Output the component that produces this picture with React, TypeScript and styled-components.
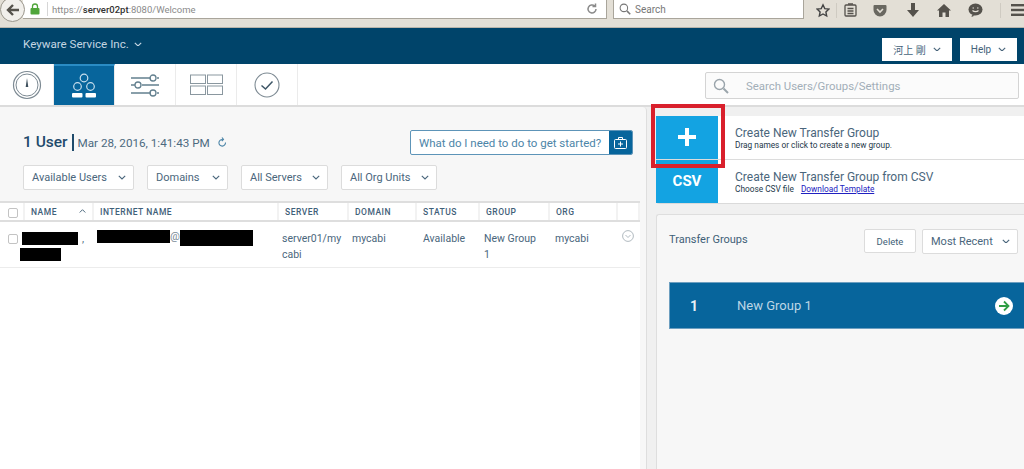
import React from 'react';
import styled, {createGlobalStyle} from 'styled-components';

const GlobalStyle = createGlobalStyle`
  html, body {
    margin: 0;
    padding: 0;
    height: 469px;
    overflow: hidden;
    background: #f0f0f0;
    font-family: Roboto, "Liberation Sans", "Noto Sans CJK JP", sans-serif;
    color: #34556e;
  }
  * { box-sizing: border-box; }
`;

const Page = styled.div`
  width: 1024px;
  height: 469px;
  display: flex;
  flex-direction: column;
  overflow: hidden;
  position: relative;
`;

/* browser chrome */
const Chrome = styled.div`
  height: 28px;
  flex: none;
  background: #e3dfd6;
  border-bottom: 1px solid #b9b5ab;
  display: flex;
  align-items: flex-start;
  position: relative;
`;

const BackButton = styled.div`
  width: 25px;
  height: 25px;
  margin-top: -3px;
  border-radius: 50%;
  border: 1px solid #9a968c;
  background: #f1efeb;
  display: flex;
  align-items: center;
  justify-content: center;
  flex: none;
  z-index: 1;
`;

const UrlBar = styled.div`
  width: 584px;
  margin-left: -2px;
  height: 19px;
  background: #fff;
  border-right: 1px solid #a9a59b;
  border-bottom: 1px solid #a9a59b;
  display: flex;
  align-items: center;
  padding: 0 8px 0 7px;
  flex: none;
`;

const UrlDivider = styled.span`
  width: 1px;
  height: 14px;
  background: #d6d6d6;
  margin: 0 4px 0 7px;
`;

const UrlText = styled.span`
  font-size: 9.5px;
  color: #8a8a8a;
  flex: 1;
  b { color: #333; font-weight: 500; }
`;

const BrowserSearch = styled.div`
  width: 191px;
  height: 19px;
  margin-left: 6px;
  background: #fff;
  border: 1px solid #a9a59b;
  border-top: none;
  display: flex;
  align-items: center;
  gap: 4px;
  padding-left: 5px;
  font-size: 10px;
  color: #777;
  flex: none;
`;

const ChromeIcons = styled.div`
  flex: 1;
  height: 20px;
  display: flex;
  align-items: center;
  padding-left: 12px;
  color: #55524c;
`;

const ChromeIcon = styled.span<{$w: number}>`
  width: ${p => p.$w}px;
  display: flex;
  justify-content: center;
  flex: none;
`;

const ChromeSep = styled.span<{$left: number}>`
  width: 1px;
  height: 15px;
  margin-left: ${p => p.$left}px;
  background: #cfcbc2;
  flex: none;
`;

/* blue header */
const Header = styled.header`
  height: 36px;
  flex: none;
  background: #00446a;
  display: flex;
  align-items: center;
  padding: 6px 7px 0 23px;
  gap: 8px;
`;

const Brand = styled.div`
  flex: 1;
  color: #c4d6e2;
  font-size: 11.6px;
  display: flex;
  align-items: center;
  gap: 5px;
  margin-top: -10px;
`;

const HeaderButton = styled.div<{$w: number}>`
  width: ${p => p.$w}px;
  height: 23px;
  background: #fff;
  color: #44637a;
  font-size: 10px;
  display: flex;
  align-items: center;
  justify-content: center;
  gap: 7px;
`;

/* tab row */
const Nav = styled.nav`
  height: 43px;
  flex: none;
  background: #fff;
  border-bottom: 2px solid #dcdcdc;
  display: flex;
  align-items: stretch;
`;

const Tab = styled.div<{$w?: number; $active?: boolean}>`
  width: ${p => p.$w ?? 61}px;
  background: ${p => (p.$active ? '#07659c' : '#fff')};
  border-top: ${p => (p.$active ? '2px solid #2a8cc4' : 'none')};
  border-right: 1px solid #ebebeb;
  display: flex;
  align-items: center;
  justify-content: center;
  flex: none;
`;

const NavSearch = styled.div`
  width: 314px;
  height: 27px;
  margin: 8px 5px 0 auto;
  border: 1px solid #d4d4d4;
  border-radius: 2px;
  background: #fbfbfb;
  display: flex;
  align-items: center;
  padding-left: 7px;
  gap: 17px;
  color: #a2aeb8;
  font-size: 11.4px;
`;

/* page body */
const Body = styled.main`
  flex: 1;
  display: grid;
  grid-template-columns: 647px 1fr;
  min-height: 0;
`;

const LeftPanel = styled.section`
  background: #f7f7f7;
  border-right: 1px solid #dedede;
  border-radius: 0 4px 0 0;
  padding-right: 6px;
  display: flex;
  flex-direction: column;
`;

const TitleRow = styled.div`
  display: flex;
  align-items: center;
  padding: 22px 7px 0 23px;
  height: 49px;
`;

const Title = styled.h1`
  margin: 0;
  font-size: 15.5px;
  font-weight: 500;
  color: #1f4b6b;
  padding-right: 4px;
  border-right: 2px solid #1f4b6b;
  line-height: 17px;
`;

const Stamp = styled.span`
  font-size: 11.7px;
  color: #4d6a80;
  margin-left: 4px;
  flex: 1;
  display: flex;
  align-items: center;
  gap: 8px;
`;

const StartedBox = styled.div`
  width: 223px;
  height: 25px;
  display: flex;
  border: 1px solid #5d94b8;
  border-radius: 2px;
  background: #fff;
  overflow: hidden;
  color: #4c85a8;
  font-size: 11.5px;
  white-space: nowrap;
  align-items: center;
  padding-left: 8px;
  justify-content: space-between;
`;

const StartedIcon = styled.span`
  width: 23px;
  height: 100%;
  background: #07659c;
  display: flex;
  align-items: center;
  justify-content: center;
  flex: none;
`;

const Filters = styled.div`
  display: flex;
  gap: 13px;
  padding: 9px 0 0 23px;
  height: 45px;
`;

const Select = styled.div<{$w: number}>`
  width: ${p => p.$w}px;
  height: 25px;
  background: #fff;
  border: 1px solid #dcdcdc;
  border-radius: 2px;
  color: #4a667c;
  font-size: 11px;
  display: flex;
  align-items: center;
  justify-content: space-between;
  padding: 0 7px 0 8px;
  flex: none;
`;

const TableWrap = styled.div`
  flex: 1;
  background: #fff;
  border-top: 2px solid #dedede;
  font-size: 10.5px;
  color: #4a667c;
`;

const columns = '25px 69px 185px 70px 68px 63px 70px 68px 22px';

const HeadRow = styled.div`
  display: grid;
  grid-template-columns: ${columns};
  height: 19px;
  border-bottom: 2px solid #dedede;
`;

const HeadCell = styled.div<{$flush?: boolean}>`
  font-size: 8.5px;
  font-weight: 500;
  letter-spacing: 0.5px;
  color: #3f6079;
  display: flex;
  align-items: center;
  justify-content: space-between;
  padding: ${p => (p.$flush ? '0' : '0 6px')};
  border-right: 2px solid #f2f2f2;
`;

const Row = styled.div`
  display: grid;
  grid-template-columns: ${columns};
  height: 46px;
  border-bottom: 1px solid #ececec;
`;

const Cell = styled.div<{$left?: number}>`
  padding: 9px 2px 0 ${p => p.$left ?? 3}px;
  line-height: 16px;
`;

const ExpandCell = styled.div`
  padding: 8px 0 0 4px;
  svg { display: block; }
`;

const CheckBox = styled.span<{$top?: number}>`
  display: block;
  width: 10px;
  height: 10px;
  margin: ${p => p.$top ?? 5}px 0 0 8px;
  background: #fff;
  border: 1px solid #c3c3c3;
  border-radius: 2px;
`;

const Redacted = styled.span<{$w: number; $h: number}>`
  display: inline-block;
  width: ${p => p.$w}px;
  height: ${p => p.$h}px;
  background: #000;
  flex: none;
`;

const NameCell = styled.div`
  display: flex;
  flex-direction: column;
  gap: 3px;
  padding-top: 10px;
  margin-left: -5px;
`;

const NameLine = styled.div`
  display: flex;
  align-items: flex-end;
  gap: 4px;
  line-height: 12px;
  margin-left: 2px;
`;

const MailCell = styled.div`
  display: flex;
  align-items: flex-start;
  padding: 8px 0 0 3px;
  font-size: 11px;
  line-height: 14px;
  color: #7b8a96;
`;

const RightPanel = styled.aside`
  padding: 9px 0 0 9px;
  display: flex;
  flex-direction: column;
  gap: 10px;
  min-width: 0;
`;

const ActionCard = styled.div`
  background: #fff;
  border-radius: 3px 0 0 3px;
  border-bottom: 1px solid #dadada;
  display: flex;
  flex-direction: column;
`;

const Action = styled.div<{$divided?: boolean}>`
  height: 43.5px;
  display: flex;
  border-bottom: ${p => (p.$divided ? '1px solid #dcdcdc' : 'none')};
`;

const ActionTile = styled.div`
  width: 62px;
  background: #13a3e2;
  color: #fff;
  font-weight: 700;
  font-size: 15px;
  display: flex;
  align-items: center;
  justify-content: center;
  flex: none;
`;

const ActionText = styled.div`
  padding: 10px 0 0 17px;
  font-size: 12px;
  color: #4a667c;
  line-height: 15px;
`;

const ActionSub = styled.div`
  font-size: 8.3px;
  line-height: 9px;
  color: #24384a;
  a {
    color: #2020c0;
    text-decoration: underline;
    margin-left: 5px;
  }
`;

const GroupsPanel = styled.div`
  flex: 1;
  background: #f7f7f7;
  border: 1px solid #dedede;
  border-right: none;
  border-bottom: none;
  border-radius: 3px 0 0 0;
  padding: 13px 0 0 12px;
`;

const GroupsHead = styled.div`
  display: flex;
  align-items: center;
  height: 26px;
  padding-right: 6px;
  gap: 6px;
`;

const GroupsTitle = styled.div`
  flex: 1;
  font-size: 11px;
  color: #3f5f77;
  margin-top: -3px;
`;

const SmallButton = styled.div`
  width: 52px;
  height: 24px;
  background: #fff;
  border: 1px solid #dcdcdc;
  border-radius: 2px;
  font-size: 9.5px;
  color: #3f5f77;
  display: flex;
  align-items: center;
  justify-content: center;
`;

const GroupRow = styled.div`
  margin-top: 28px;
  height: 47px;
  background: #07659c;
  border: 1px solid #6d9fc0;
  border-right: none;
  color: #bcd6e6;
  display: flex;
  align-items: center;
  padding: 0 11px 0 20px;
  font-size: 13px;
`;

const GroupIndex = styled.span`
  width: 47px;
  color: #e6f0f6;
  font-size: 14px;
  font-weight: 700;
`;

const GroupName = styled.span`
  flex: 1;
`;

const Highlight = styled.div`
  position: absolute;
  left: 651px;
  top: 104px;
  width: 74px;
  height: 64px;
  border: 4px solid #d9202c;
`;

const Chevron = ({size = 8, color = '#4a667c', up = false}: {size?: number; color?: string; up?: boolean}) => (
    <svg width={size} height={size * 0.6} viewBox="0 0 10 6" fill="none" stroke={color} strokeWidth="1.4">
        <path d={up ? 'M1 5l4-4 4 4' : 'M1 1l4 4 4-4'}/>
    </svg>
);

const Magnifier = ({size, color}: {size: number; color: string}) => (
    <svg width={size} height={size} viewBox="0 0 16 16" fill="none" stroke={color} strokeWidth="1.4">
        <circle cx="6.5" cy="6.5" r="5"/>
        <path d="M10.5 10.5l4.5 4.5" strokeWidth="2"/>
    </svg>
);

const App = () => {
    return (
        <Page>
            <GlobalStyle/>
            <Chrome>
                <BackButton>
                    <svg width="14" height="12" viewBox="0 0 14 12" fill="none" stroke="#55524c" strokeWidth="2.4">
                        <path d="M13 6H2M7 1L2 6l5 5"/>
                    </svg>
                </BackButton>
                <UrlBar>
                    <svg width="10" height="12" viewBox="0 0 10 12">
                        <path d="M2.5 5V3.5a2.5 2.5 0 0 1 5 0V5" fill="none" stroke="#4fa53a" strokeWidth="1.3"/>
                        <rect x="0.5" y="5" width="9" height="6.5" rx="1" fill="#4fa53a"/>
                    </svg>
                    <UrlDivider/>
                    <UrlText>https://<b>server02pt</b>:8080/Welcome</UrlText>
                    <svg width="12" height="12" viewBox="0 0 12 12" fill="none" stroke="#8b8b8b" strokeWidth="1.5">
                        <path d="M10 6a4 4 0 1 1-1.3-3M9.500 0.500v3h-3"/>
                    </svg>
                </UrlBar>
                <BrowserSearch>
                    <Magnifier size={12} color="#777"/>
                    Search
                </BrowserSearch>
                <ChromeIcons>
                    <ChromeIcon $w={14}>
                        <svg width="15" height="15" viewBox="0 0 16 16" fill="none" stroke="#444" strokeWidth="1.6">
                            <path d="M8 1.500l2 4.300 4.700.6-3.400 3.200.9 4.700L8 12l-4.200 2.300.9-4.700L1.300 6.400 6 5.800z"/>
                        </svg>
                    </ChromeIcon>
                    <ChromeSep $left={6}/>
                    <ChromeIcon $w={26}>
                        <svg width="13" height="14" viewBox="0 0 13 14" fill="none" stroke="#55524c" strokeWidth="1.3">
                            <rect x="1" y="2" width="11" height="11" rx="1"/>
                            <path d="M4 1h5M3.500 5.500h6M3.500 8h6M3.500 10.500h6"/>
                        </svg>
                    </ChromeIcon>
                    <ChromeIcon $w={34}>
                        <svg width="14" height="13" viewBox="0 0 14 13">
                            <path d="M1.500 1h11A1 1 0 0 1 13.500 2v4a6.500 6.500 0 0 1-13 0V2a1 1 0 0 1 1-1z" fill="#6a6861"/>
                            <path d="M4 5l3 3 3-3" fill="none" stroke="#e3dfd6" strokeWidth="1.6"/>
                        </svg>
                    </ChromeIcon>
                    <ChromeIcon $w={32}>
                        <svg width="12" height="14" viewBox="0 0 12 14" fill="#55524c">
                            <path d="M4 0h4v7h4l-6 7-6-7h4z"/>
                        </svg>
                    </ChromeIcon>
                    <ChromeIcon $w={30}>
                        <svg width="14" height="13" viewBox="0 0 14 13" fill="#55524c">
                            <path d="M7 0l7 6.500h-2V13H8.500V8.500h-3V13H2V6.500H0z"/>
                        </svg>
                    </ChromeIcon>
                    <ChromeIcon $w={32}>
                        <svg width="15" height="14" viewBox="0 0 15 14">
                            <ellipse cx="7.500" cy="6.500" rx="7" ry="6" fill="#55524c"/>
                            <path d="M4 12l-.5 2L7 12.500z" fill="#55524c"/>
                            <path d="M4.500 7.500c1.500 1.500 4.500 1.500 6 0M4.500 5h1.500M9 5h1.500" stroke="#e3dfd6" strokeWidth="1.1" fill="none"/>
                        </svg>
                    </ChromeIcon>
                    <ChromeSep $left={9}/>
                    <ChromeIcon $w={34}>
                        <svg width="14" height="12" viewBox="0 0 14 12" fill="#55524c">
                            <rect width="14" height="2.400"/>
                            <rect y="4.800" width="14" height="2.400"/>
                            <rect y="9.600" width="14" height="2.400"/>
                        </svg>
                    </ChromeIcon>
                </ChromeIcons>
            </Chrome>

            <Header>
                <Brand>Keyware Service Inc. <Chevron color="#c4d6e2"/></Brand>
                <HeaderButton $w={70}>河上 剛 <Chevron/></HeaderButton>
                <HeaderButton $w={57}>Help <Chevron/></HeaderButton>
            </Header>

            <Nav>
                <Tab $w={54}>
                    <svg width="30" height="30" viewBox="0 0 30 30" fill="none" stroke="#7d8a93">
                        <circle cx="15" cy="15" r="13.500" strokeWidth="1.200"/>
                        <circle cx="15" cy="15" r="11" strokeWidth="1"/>
                        <path d="M15 8l1.300 9h-2.600z" fill="#3d4f5c" stroke="none"/>
                    </svg>
                </Tab>
                <Tab $active>
                    <svg width="26" height="26" viewBox="0 0 26 26" fill="none" stroke="#c7deed" strokeWidth="1.200">
                        <circle cx="13" cy="5" r="3.800"/>
                        <circle cx="6.500" cy="13.500" r="3.800"/>
                        <circle cx="19.500" cy="13.500" r="3.800"/>
                        <rect x="1" y="20" width="10.500" height="4.500" rx="1" fill="#fff" stroke="none"/>
                        <rect x="14.500" y="20" width="10.500" height="4.500" rx="1" fill="#fff" stroke="none"/>
                    </svg>
                </Tab>
                <Tab>
                    <svg width="30" height="24" viewBox="0 0 30 24" fill="none" stroke="#63808f" strokeWidth="1.300">
                        <path d="M1 5h20M27 5h2M1 12h4M12 12h17M1 20h20M27 20h2"/>
                        <circle cx="23" cy="5" r="3"/>
                        <circle cx="8" cy="12" r="3"/>
                        <circle cx="23" cy="20" r="3"/>
                    </svg>
                </Tab>
                <Tab>
                    <svg width="33" height="22" viewBox="0 0 33 22" fill="none" stroke="#8a979f" strokeWidth="1">
                        <rect x="0.500" y="1" width="15" height="8.500"/>
                        <rect x="17.500" y="1" width="15" height="8.500"/>
                        <rect x="0.500" y="12" width="15" height="8.500"/>
                        <rect x="17.500" y="12" width="15" height="8.500"/>
                    </svg>
                </Tab>
                <Tab>
                    <svg width="26" height="26" viewBox="0 0 26 26" fill="none" stroke="#7d8a93" strokeWidth="1.100">
                        <circle cx="13" cy="13" r="12"/>
                        <path d="M7.500 13.500l4 3.500 7-7.500" stroke="#3d5566" strokeWidth="1.500"/>
                    </svg>
                </Tab>
                <NavSearch>
                    <Magnifier size={16} color="#9aa4ab"/>
                    Search Users/Groups/Settings
                </NavSearch>
            </Nav>

            <Body>
                <LeftPanel>
                    <TitleRow>
                        <Title>1 User</Title>
                        <Stamp>
                            Mar 28, 2016, 1:41:43 PM
                            <svg width="9" height="11" viewBox="0 0 9 11" fill="none" stroke="#4c85a8" strokeWidth="1.100">
                                <path d="M7.500 5.500A3.300 3.300 0 1 1 4.500 2.500M4 .5l1.500 2L3.800 4"/>
                            </svg>
                        </Stamp>
                        <StartedBox>
                            What do I need to do to get started?
                            <StartedIcon>
                                <svg width="13" height="12" viewBox="0 0 13 12" fill="none" stroke="#fff" strokeWidth="1">
                                    <rect x="0.500" y="2.500" width="12" height="9" rx="1"/>
                                    <path d="M4.500 2.500V.5h4v2M6.500 4.500v5M4 7h5"/>
                                </svg>
                            </StartedIcon>
                        </StartedBox>
                    </TitleRow>
                    <Filters>
                        <Select $w={111}>Available Users <Chevron/></Select>
                        <Select $w={81}>Domains <Chevron/></Select>
                        <Select $w={87}>All Servers <Chevron/></Select>
                        <Select $w={96}>All Org Units <Chevron/></Select>
                    </Filters>
                    <TableWrap>
                        <HeadRow>
                            <HeadCell $flush><CheckBox $top={2}/></HeadCell>
                            <HeadCell>NAME <Chevron up size={7}/></HeadCell>
                            <HeadCell>INTERNET NAME</HeadCell>
                            <HeadCell>SERVER</HeadCell>
                            <HeadCell>DOMAIN</HeadCell>
                            <HeadCell>STATUS</HeadCell>
                            <HeadCell>GROUP</HeadCell>
                            <HeadCell>ORG</HeadCell>
                            <HeadCell/>
                        </HeadRow>
                        <Row>
                            <div><CheckBox $top={12}/></div>
                            <NameCell>
                                <NameLine><Redacted $w={56} $h={13}/>,</NameLine>
                                <Redacted $w={41} $h={13}/>
                            </NameCell>
                            <MailCell>
                                <Redacted $w={73} $h={13}/>@<Redacted $w={73} $h={16}/>
                            </MailCell>
                            <Cell>server01/my<br/>cabi</Cell>
                            <Cell>mycabi</Cell>
                            <Cell $left={6}>Available</Cell>
                            <Cell $left={4}>New Group<br/>1</Cell>
                            <Cell $left={5}>mycabi</Cell>
                            <ExpandCell>
                                <svg width="12" height="12" viewBox="0 0 12 12" fill="none" stroke="#a8b2b9" strokeWidth="0.900">
                                    <circle cx="6" cy="6" r="5.400"/>
                                    <path d="M3.500 5l2.500 2.500L8.500 5"/>
                                </svg>
                            </ExpandCell>
                        </Row>
                    </TableWrap>
                </LeftPanel>

                <RightPanel>
                    <ActionCard>
                        <Action $divided>
                            <ActionTile>
                                <svg width="18" height="18" viewBox="0 0 18 18" fill="#fff">
                                    <path d="M7 0h4v7h7v4h-7v7H7v-7H0V7h7z"/>
                                </svg>
                            </ActionTile>
                            <ActionText>
                                Create New Transfer Group
                                <ActionSub>Drag names or click to create a new group.</ActionSub>
                            </ActionText>
                        </Action>
                        <Action>
                            <ActionTile>CSV</ActionTile>
                            <ActionText>
                                Create New Transfer Group from CSV
                                <ActionSub>Choose CSV file <a href="#template">Download Template</a></ActionSub>
                            </ActionText>
                        </Action>
                    </ActionCard>
                    <GroupsPanel>
                        <GroupsHead>
                            <GroupsTitle>Transfer Groups</GroupsTitle>
                            <SmallButton>Delete</SmallButton>
                            <Select $w={96}>Most Recent <Chevron/></Select>
                        </GroupsHead>
                        <GroupRow>
                            <GroupIndex>1</GroupIndex>
                            <GroupName>New Group 1</GroupName>
                            <svg width="18" height="18" viewBox="0 0 18 18" fill="none">
                                <circle cx="9" cy="9" r="9" fill="#fff"/>
                                <path d="M4 9h9M9 4.500L13.500 9 9 13.500" stroke="#2f9e44" strokeWidth="1.800"/>
                            </svg>
                        </GroupRow>
                    </GroupsPanel>
                </RightPanel>
            </Body>
            <Highlight/>
        </Page>
    );
};

export default App;
